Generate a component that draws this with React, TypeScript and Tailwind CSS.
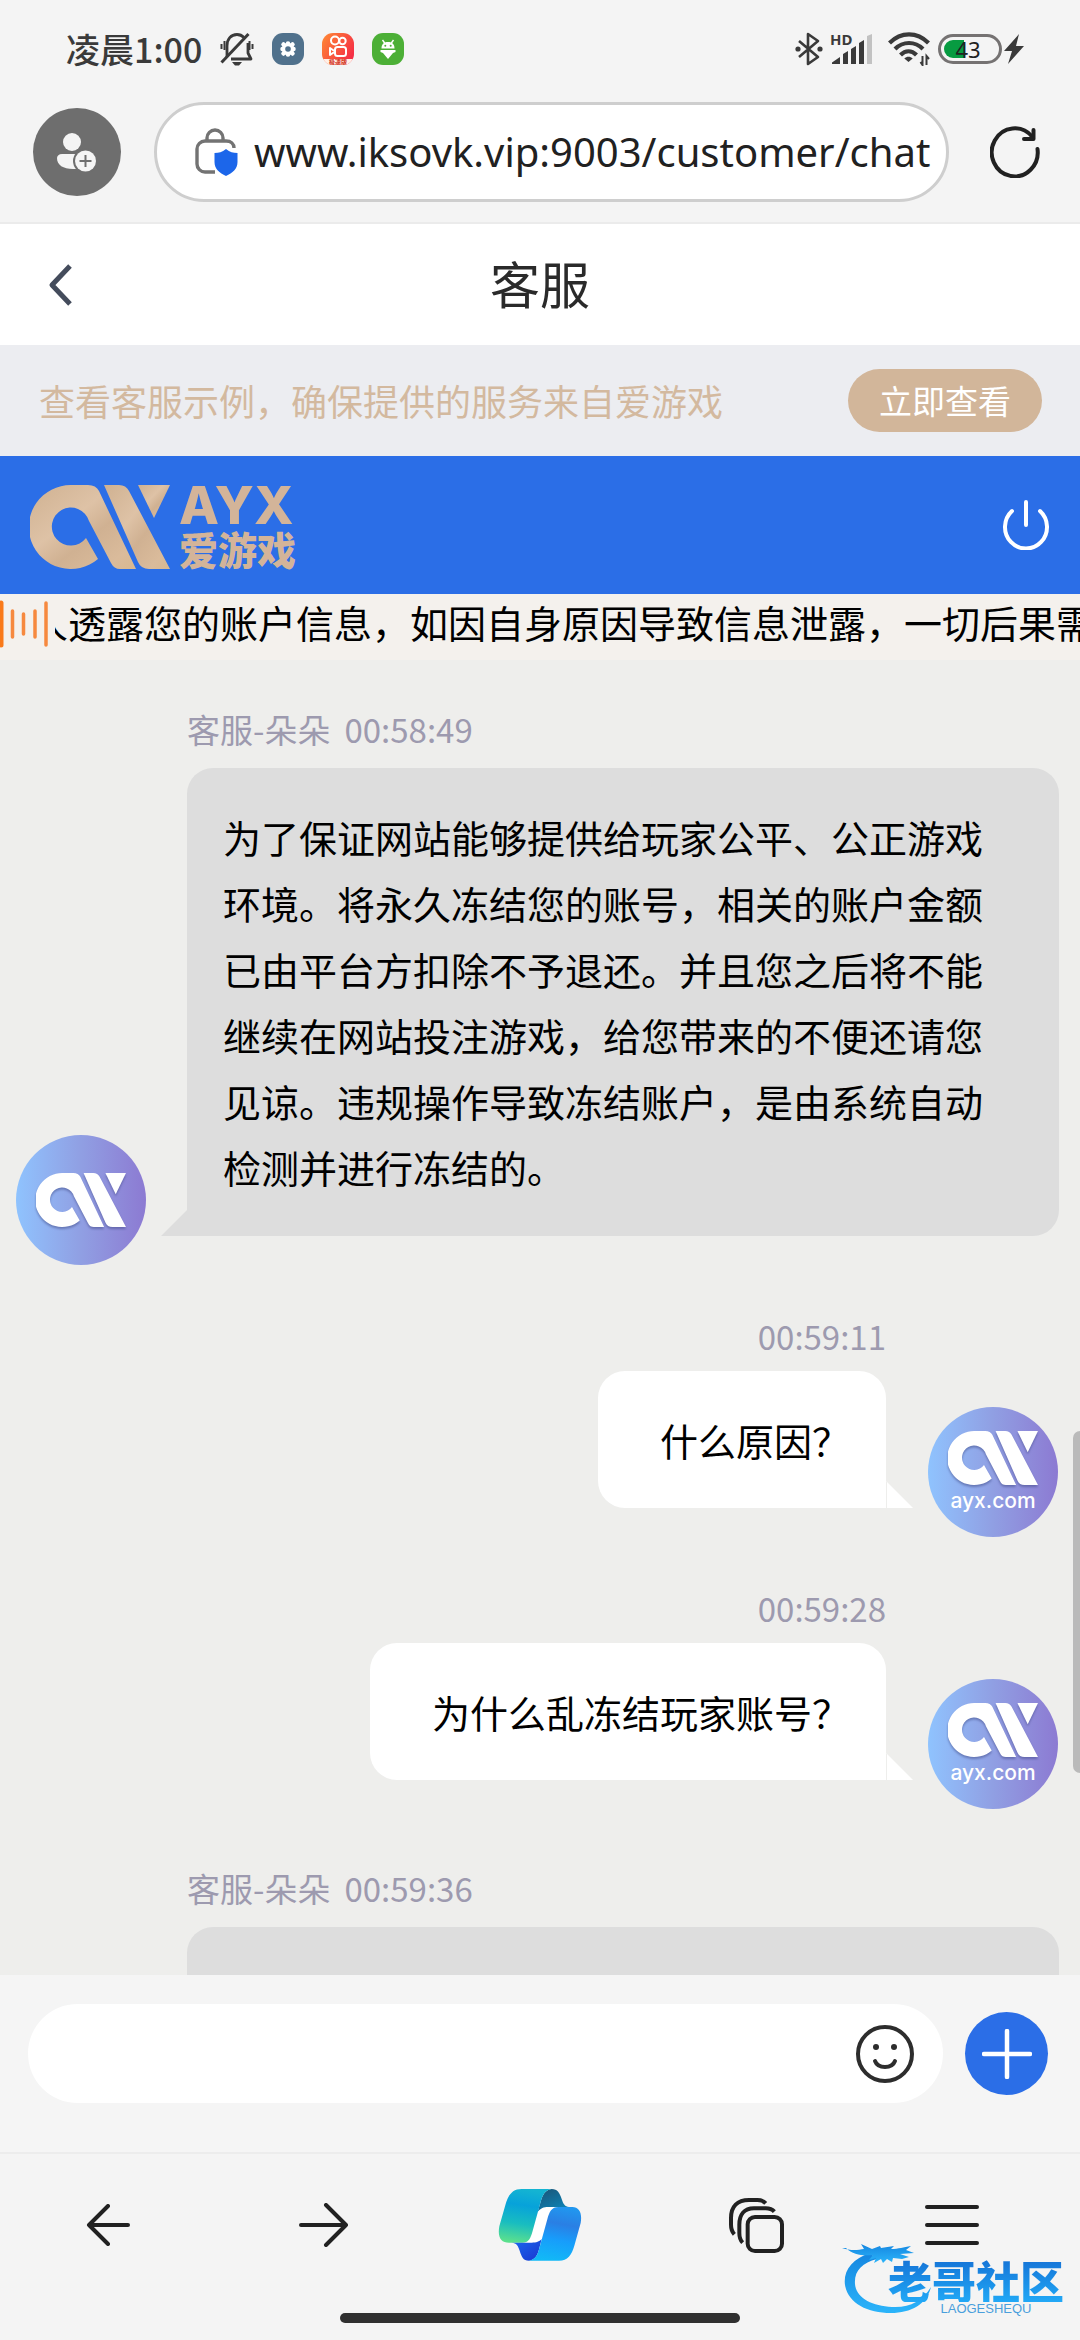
import type { ReactNode } from "react";

const statusIcon = "h-8 w-8 shrink-0";

function BellOff() {
  return (
    <svg viewBox="0 0 34 34" className="h-[34px] w-[34px] shrink-0" fill="none" stroke="#3a3a3a" strokeWidth="2.8">
      <path d="M7 25V14C7 7 11 2.500 17 2.500c3 0 5 1 7 3" />
      <path d="M28 11v10l3 6H11" strokeLinejoin="round" />
      <path d="M1.500 30.500 28.500 2" strokeWidth="3" />
      <path d="M1.500 12v5M4.500 9v9M29.500 9v9M32.500 12v5" strokeWidth="2" />
      <path d="M12 30h10l-3 3.500h-4z" fill="#3a3a3a" stroke="none" />
    </svg>
  );
}

function GearApp() {
  return (
    <svg viewBox="0 0 32 32" className={statusIcon}>
      <rect width="32" height="32" rx="11" fill="#50718c" />
      <g stroke="#fff" strokeWidth="4.500" strokeLinecap="round">
        <path d="M16 10.500v11M10.500 16h11M11.500 11.500l9 9M20.500 11.500l-9 9" />
      </g>
      <circle cx="16" cy="16" r="6" fill="#fff" />
      <circle cx="16" cy="16" r="2.800" fill="#50718c" />
    </svg>
  );
}

function CameraApp() {
  return (
    <svg viewBox="0 0 32 32" className={statusIcon}>
      <defs>
        <linearGradient id="cam" x1="0" y1="0" x2="1" y2="0.600">
          <stop offset="0" stopColor="#ff8a33" />
          <stop offset="1" stopColor="#f52f45" />
        </linearGradient>
        <clipPath id="camclip">
          <rect width="32" height="32" rx="11" />
        </clipPath>
      </defs>
      <g clipPath="url(#camclip)">
        <rect width="32" height="32" fill="url(#cam)" />
        <g fill="none" stroke="#fff" strokeWidth="2">
          <circle cx="13" cy="7.500" r="4" />
          <circle cx="20.500" cy="8" r="3.200" />
          <rect x="13" y="14" width="11" height="9" rx="2.500" />
          <path d="m8 15 5 3.500L8 22z" strokeLinejoin="round" />
        </g>
        <path d="M0 26h32v6H0z" fill="#fff0e8" />
        <text x="16" y="31" fontSize="6" fontWeight="900" textAnchor="middle" fill="#d6402f">
          极速版
        </text>
      </g>
    </svg>
  );
}

function AndroidApp() {
  return (
    <svg viewBox="0 0 32 32" className={statusIcon}>
      <rect width="32" height="32" rx="11" fill="#4caf36" />
      <path d="M9.500 15.500c0-4 2-6.500 6.500-6.500s6.500 2.500 6.500 6.500z" fill="#fff" />
      <path d="m10.500 7 2.500 3.500M21.500 7 19 10.500" stroke="#fff" strokeWidth="1.400" />
      <path d="M8.500 17h15v2l-2.500 1-5 6-5-6-2.500-1z" fill="#fff" />
      <circle cx="13.300" cy="12.700" r="1" fill="#4caf36" />
      <circle cx="18.700" cy="12.700" r="1" fill="#4caf36" />
    </svg>
  );
}

function Bluetooth() {
  return (
    <svg viewBox="0 0 28 34" className="h-[34px] w-7 shrink-0" fill="none" stroke="#3a3a3a" strokeWidth="2.600">
      <path d="m4 9 19 16-10 7V2l10 7L4 25" strokeLinejoin="round" />
      <circle cx="3" cy="17" r="2.600" fill="#3a3a3a" stroke="none" />
      <circle cx="25" cy="17" r="2.600" fill="#3a3a3a" stroke="none" />
    </svg>
  );
}

function Signal() {
  return (
    <svg viewBox="0 0 41 32" className="h-8 w-[41px] shrink-0 overflow-visible" fill="#3a3a3a">
      <text x="-1" y="12" fontSize="15" fontWeight="700" fontFamily="Noto Sans, sans-serif">
        HD
      </text>
      <path d="M1 29.500 9 24v7H1zM12 21l5-3v13h-5zM20 16l5-3v18h-5zM28 10l5-3v24h-5z" />
      <path d="M36 3l5-2v30h-5z" fill="#c2c2c2" />
    </svg>
  );
}

function Wifi() {
  return (
    <svg viewBox="0 0 42 34" className="h-[34px] w-[42px] shrink-0" fill="none" stroke="#3a3a3a" strokeWidth="4.200">
      <path d="M1.500 11C13-.5 29-.5 40.500 11" />
      <path d="M7 17c8-8 20-8 28 0" />
      <path d="M12.500 23c5-5 11-5 16 0" />
      <path d="m20.500 30-4.200-3.500c2.500-2.300 5.900-2.300 8.400 0z" fill="#3a3a3a" stroke="none" />
      <path d="M34.500 24v9l-2-3M38.500 33v-9l2.500 3" strokeWidth="2" />
    </svg>
  );
}

function Battery() {
  return (
    <div className="relative flex h-[30px] w-16 shrink-0 items-center justify-center rounded-full border-[3px] border-[#757272]">
      <div className="absolute inset-y-[3px] left-[3px] w-5 rounded-l-full bg-[#079b41]" />
      <span className="relative pr-1 font-['Noto_Sans'] text-[22px] leading-6 text-[#222]">43</span>
    </div>
  );
}

function Lock() {
  return (
    <svg viewBox="0 0 43 48" className="h-12 w-[43px] shrink-0">
      <g fill="none" stroke="#737373" strokeWidth="3.400">
        <path d="M12 13v-3a8 8 0 0 1 16 0v3" />
        <path d="M20 44h-10a8 8 0 0 1-8-8V21a8 8 0 0 1 8-8h21c5 0 8 3 8 7" />
      </g>
      <path d="M31 21c4 3 7 4 11.500 4v9c0 7-5 11-11.500 14-6.500-3-11.500-7-11.500-14v-9c4.500 0 7.500-1 11.500-4z" fill="#1c66ea" />
    </svg>
  );
}

function Mark({ className, fill }: { className: string; fill: string }) {
  return (
    <svg viewBox="0 0 140 84" className={className} fill={fill}>
      <defs>
        <linearGradient id="gold" x1="0" y1="0" x2="1" y2="1">
          <stop offset="0" stopColor="#cfb191" />
          <stop offset="0.400" stopColor="#dec2a6" />
          <stop offset="0.600" stopColor="#d0b192" />
          <stop offset="0.850" stopColor="#dabb9b" />
          <stop offset="1" stopColor="#d8b88f" />
        </linearGradient>
      </defs>
      <path d="M41 0H58Q66 0 69 6L106 84H90Q84 84 81 78L59 36A19 19 0 1 0 56 53L68 74A42 42 0 1 1 41 0Z" />
      <path d="M74 0H89Q96 0 99 6L140 84H119Q111 84 108 77Z" />
      <path d="M108 0H140L124 33Z" />
    </svg>
  );
}

function Avatar({ caption }: { caption?: string }) {
  return (
    <div className="-mb-[29px] flex h-[130px] w-[130px] shrink-0 flex-col items-center justify-center rounded-full bg-linear-to-r from-[#8fc3fe] via-[#909fe3] to-[#8c7ad2] text-white">
      <Mark className="h-[54px] w-[90px] drop-shadow-[0_2px_1px_rgba(60,70,130,0.5)]" fill="#fff" />
      {caption && <span className="mt-1 font-['Inter'] text-[21px] leading-6 font-medium">{caption}</span>}
    </div>
  );
}

function AgentMessage({ name, time, children }: { name: string; time: string; children?: ReactNode }) {
  return (
    <article className="mb-[77px] pt-2">
      <div className="mb-[14px] ml-[187px] flex h-12 items-center gap-[14px] text-[33px] text-[#9d9aaf]">
        <span>{name}</span>
        <time>{time}</time>
      </div>
      <div className="flex items-end gap-[41px] pr-[21px] pl-4">
        <Avatar />
        <div className="relative min-h-[200px] flex-1 rounded-[26px] rounded-bl-none bg-[#dddddd] py-9 pr-[60px] pl-9 text-[38px] leading-[66px] text-black">
          {children}
          <span className="absolute right-full bottom-0 h-[26px] w-[26px] bg-[#dddddd] [clip-path:polygon(100%_0,100%_100%,0_100%)]" />
        </div>
      </div>
    </article>
  );
}

function UserMessage({ time, children }: { time: string; children: ReactNode }) {
  return (
    <article className="mb-[77px] flex items-end justify-end gap-[42px] pr-[22px]">
      <div className="flex flex-col items-end">
        <time className="mb-[10px] flex h-12 items-center text-[33px] text-[#9d9aaf]">{time}</time>
        <div className="relative rounded-[27px] rounded-br-none bg-white py-9 pr-9 pl-[62px] text-[38px] leading-[65px] text-black">
          {children}
          <span className="absolute bottom-0 left-full h-[27px] w-[27px] border-l border-[#eeeeec] bg-white [clip-path:polygon(0_0,100%_100%,0_100%)]" />
        </div>
      </div>
      <Avatar caption="ayx.com" />
    </article>
  );
}

function Copilot() {
  return (
    <svg viewBox="0 0 250 216" className="h-[72px] w-[84px]">
      <defs>
        <linearGradient id="cpLeft" x1="0.500" y1="0" x2="0.350" y2="1">
          <stop offset="0" stopColor="#14b4d2" />
          <stop offset="0.300" stopColor="#07a2da" />
          <stop offset="0.650" stopColor="#19bdc0" />
          <stop offset="1" stopColor="#5be08d" />
        </linearGradient>
        <linearGradient id="cpTop" x1="0" y1="0" x2="0.600" y2="1">
          <stop offset="0" stopColor="#1b5375" />
          <stop offset="1" stopColor="#0d82b4" />
        </linearGradient>
        <linearGradient id="cpRight" x1="0.600" y1="0" x2="0.400" y2="1">
          <stop offset="0" stopColor="#2196ee" />
          <stop offset="0.300" stopColor="#2a7fe4" />
          <stop offset="0.600" stopColor="#179dfb" />
          <stop offset="1" stopColor="#12b9f6" />
        </linearGradient>
        <linearGradient id="cpBottom" x1="0" y1="0" x2="1" y2="1">
          <stop offset="0" stopColor="#1c6bf0" />
          <stop offset="1" stopColor="#1a35cf" />
        </linearGradient>
      </defs>
      <path d="M145 54H180C160 54 153 68 147 91L131 148C127 158 118 161 100 161H80C93 158 98 145 103 125L120 65C124 56 132 54 145 54Z" fill="#fff" />
      <path d="M160 0C178 0 184 12 190 30C195 46 200 53 212 54H150C135 54 128 58 118 68L127 38C132 20 140 2 160 0Z" fill="url(#cpTop)" />
      <path d="M70 0H160C140 2 132 20 127 38L103 125C97 148 90 161 72 161H32C8 161-3 145 3 112L22 45C30 18 42 0 70 0Z" fill="url(#cpLeft)" />
      <path d="M92 215C74 215 70 203 64 185C59 170 55 162 40 161H100C115 161 122 158 130 150L123 178C118 196 112 214 92 215Z" fill="url(#cpBottom)" />
      <path d="M180 54H222C243 54 252 72 247 102L228 170C220 198 208 215 182 215H90C112 214 118 196 123 178L147 91C153 68 160 54 180 54Z" fill="url(#cpRight)" />
    </svg>
  );
}

function Watermark() {
  return (
    <div className="pointer-events-none absolute right-4 bottom-6 flex h-[76px] w-[222px] justify-end">
      <svg viewBox="0 0 222 76" className="absolute inset-0 h-full w-full">
        <defs>
          <linearGradient id="ring" x1="0" y1="0" x2="0" y2="1">
            <stop offset="0" stopColor="#1586e0" />
            <stop offset="1" stopColor="#2bb4fa" />
          </linearGradient>
        </defs>
        <g fill="url(#ring)">
          <path d="M28 13C10 19 1 31 3 45c3 18 22 28 46 28 20 0 36-9 40-26-9 14-21 21-39 20C30 66 14 58 13 44c-1-13 7-21 22-25z" />
          <path d="M0 8c9 3 16 2 22 1l-3-5 11 5 8-3 1 2 13-2-3 3c8 0 12-2 20-3l-5 4 8 3-14 1 9 3-7 2-9-1-1 4-5-3-4 4-2-4-7 4 2-5-7 2 4-5c-10 1-20 0-27-7z" />
        </g>
      </svg>
      <div className="relative flex flex-col items-center pt-[18px]">
        <span className="bg-linear-to-b from-[#1672d6] to-[#22a8f6] bg-clip-text text-[44px] leading-[44px] font-black text-transparent">
          老哥社区
        </span>
        <span className="pl-5 font-['Liberation_Sans'] text-[13px] leading-[14px] text-[#4a9fdc]">LAOGESHEQU</span>
      </div>
    </div>
  );
}

export default function App() {
  return (
    <main className="flex h-screen flex-col overflow-hidden bg-[#f4f4f4] font-['Noto_Sans_CJK_SC',sans-serif]">
      {/* Status bar */}
      <div className="flex h-[98px] shrink-0 items-center justify-between pr-14 pl-[66px]">
        <div className="flex items-center gap-[18px]">
          <span className="pb-[2px] text-[34px] font-medium text-[#3a3a3a]">凌晨1:00</span>
          <BellOff />
          <GearApp />
          <CameraApp />
          <AndroidApp />
        </div>
        <div className="flex items-center">
          <Bluetooth />
          <div className="mr-4 ml-2">
            <Signal />
          </div>
          <Wifi />
          <div className="mr-[2px] ml-2">
            <Battery />
          </div>
          <svg viewBox="0 0 20 30" className="h-[30px] w-5" fill="#3a3a3a">
            <path d="M15 0 0 17h8L4 30 20 12h-8z" />
          </svg>
        </div>
      </div>

      {/* Address bar */}
      <div className="flex h-[126px] shrink-0 items-center border-b-2 border-[#ebebeb] pr-10 pb-4 pl-[33px]">
        <button aria-label="账户" className="flex h-[88px] w-[88px] shrink-0 items-center justify-center rounded-full bg-[#6e6e6e]">
          <svg viewBox="0 0 40 40" className="h-10 w-10">
            <circle cx="15" cy="10" r="9" fill="#f4f4f4" />
            <path d="M5 22h20v15H16C6 37 0 33 0 26c0-2 2-4 5-4z" fill="#f4f4f4" />
            <circle cx="28.500" cy="29" r="12.500" fill="#6e6e6e" />
            <circle cx="28.500" cy="29" r="10.500" fill="#f4f4f4" />
            <path d="M28.500 23v12M22.500 29h12" stroke="#6e6e6e" strokeWidth="2" />
          </svg>
        </button>
        <div className="mr-[41px] ml-[33px] flex h-[100px] min-w-0 flex-1 items-center gap-4 rounded-full border-[3px] border-[#cecece] bg-white pr-3 pl-[38px]">
          <Lock />
          <input
            aria-label="网址"
            type="text"
            defaultValue="www.iksovk.vip:9003/customer/chat"
            className="w-full min-w-0 bg-transparent font-['Noto_Sans'] text-[40px] text-[#212121] outline-none"
          />
        </div>
        <button aria-label="刷新" className="shrink-0">
          <svg viewBox="0 0 50 52" className="h-[52px] w-[50px]" fill="none" stroke="#212121" strokeWidth="4" strokeLinecap="round" strokeLinejoin="round">
            <path d="M47.500 23A23 24 0 1 1 42 10.500" />
            <path d="M43.500 4v9H34" />
          </svg>
        </button>
      </div>

      {/* Page title */}
      <header className="relative flex h-[121px] shrink-0 items-center justify-center bg-white">
        <button aria-label="返回" className="absolute left-[48px]">
          <svg viewBox="0 0 24 42" className="h-[42px] w-6" fill="none" stroke="#444c5c" strokeWidth="5">
            <path d="M22 2 4 21l18 19" strokeLinejoin="round" />
          </svg>
        </button>
        <h1 className="pb-1 text-[50px] text-[#2a2a2a]">客服</h1>
      </header>

      {/* Verification banner */}
      <div className="flex h-[111px] shrink-0 items-center justify-between bg-[#ecedf1] pr-[38px] pl-[39px]">
        <p className="pb-[2px] text-[36px] text-[#d3b99f]">查看客服示例，确保提供的服务来自爱游戏</p>
        <button className="h-[63px] w-[194px] rounded-full bg-[#d2b69a] text-[33px] leading-[63px] text-white">立即查看</button>
      </div>

      {/* Brand bar */}
      <div className="flex h-[138px] shrink-0 items-center justify-between bg-[#2b6ee7] px-[30px]">
        <div className="flex items-center gap-[9px] pt-1">
          <Mark className="h-[84px] w-[140px]" fill="url(#gold)" />
          <div className="flex flex-col text-[#d3b499]">
            <span className="font-['Inter'] text-[52px] leading-[42px] font-extrabold">AYX</span>
            <span className="text-[39px] leading-[42px] font-black">爱游戏</span>
          </div>
        </div>
        <button aria-label="退出">
          <svg viewBox="0 0 48 50" className="h-[50px] w-12" fill="none" stroke="#fff" strokeWidth="4" strokeLinecap="round">
            <path d="M24 2v23M10 11a21 21.500 0 1 0 28 0" />
          </svg>
        </button>
      </div>

      {/* Scrolling notice */}
      <div className="flex h-[66px] shrink-0 items-start bg-[#f4f1ed]">
        <svg viewBox="0 0 48 60" className="mr-[7px] h-[60px] w-12 shrink-0" stroke="#f6893f" strokeWidth="3.500" strokeLinecap="round">
          <path d="M1 9v42" stroke="#f97a1a" strokeWidth="5" />
          <path d="M12.500 17v26M23.500 20v20M35 17v26M46 9v42" />
        </svg>
        <div className="min-w-0 flex-1 overflow-hidden">
          <p className="-ml-[25px] text-[38px] leading-[56px] whitespace-nowrap text-black">
            人透露您的账户信息，如因自身原因导致信息泄露，一切后果需自行承担
          </p>
        </div>
      </div>

      {/* Conversation */}
      <section className="relative min-h-0 flex-1 overflow-hidden bg-[#eeeeec] pt-[38px]">
        <AgentMessage name="客服-朵朵" time="00:58:49">
          为了保证网站能够提供给玩家公平、公正游戏环境。将永久冻结您的账号，相关的账户金额已由平台方扣除不予退还。并且您之后将不能继续在网站投注游戏，给您带来的不便还请您见谅。违规操作导致冻结账户，是由系统自动检测并进行冻结的。
        </AgentMessage>
        <UserMessage time="00:59:11">什么原因？</UserMessage>
        <UserMessage time="00:59:28">为什么乱冻结玩家账号？</UserMessage>
        <AgentMessage name="客服-朵朵" time="00:59:36" />
        <div className="absolute top-[771px] right-0 h-[342px] w-[7px] rounded-l-full bg-[#bababa]" />
      </section>

      {/* Composer */}
      <div className="flex h-[177px] shrink-0 items-start gap-[22px] bg-[#f5f5f5] pt-[29px] pr-8 pl-7">
        <div className="flex h-[99px] flex-1 items-center rounded-full bg-white pr-[28px] pl-10">
          <input aria-label="消息" type="text" className="h-full min-w-0 flex-1 bg-transparent text-[38px] outline-none" />
          <button aria-label="表情">
            <svg viewBox="0 0 60 60" className="h-[60px] w-[60px]" fill="none" stroke="#2d2d2d" strokeWidth="4" strokeLinecap="round">
              <circle cx="30" cy="30" r="27" />
              <path d="M20 37c3 8 17 8 20 0" />
              <circle cx="21" cy="23" r="3" fill="#2d2d2d" stroke="none" />
              <circle cx="39" cy="23" r="3" fill="#2d2d2d" stroke="none" />
            </svg>
          </button>
        </div>
        <button aria-label="更多" className="mt-2 flex h-[83px] w-[83px] items-center justify-center rounded-full bg-[#2b6ee7]">
          <svg viewBox="0 0 50 50" className="h-[50px] w-[50px]" stroke="#fff" strokeWidth="4.500" strokeLinecap="round">
            <path d="M25 2v46M2 25h46" />
          </svg>
        </button>
      </div>

      {/* Browser navigation */}
      <nav className="relative h-[188px] shrink-0 border-t-2 border-[#ececec]">
        <div className="grid h-[142px] grid-cols-5 text-[#212121]">
          <button aria-label="后退" className="flex items-center justify-center">
            <svg viewBox="0 0 44 42" className="h-[42px] w-11" fill="none" stroke="currentColor" strokeWidth="4" strokeLinecap="round" strokeLinejoin="round">
              <path d="M22 2 3 21l19 19M3 21h39" />
            </svg>
          </button>
          <button aria-label="前进" className="flex items-center justify-center">
            <svg viewBox="0 0 50 44" className="h-11 w-[50px]" fill="none" stroke="currentColor" strokeWidth="4" strokeLinecap="round" strokeLinejoin="round">
              <path d="m27 2 20 20-20 20M2 22h45" />
            </svg>
          </button>
          <button aria-label="Copilot" className="flex items-center justify-center">
            <Copilot />
          </button>
          <button aria-label="标签页" className="flex items-center justify-center">
            <svg viewBox="0 0 165 165" className="h-[55px] w-[55px]" fill="none" stroke="currentColor" strokeWidth="12">
              <rect x="56" y="57" width="103" height="102" rx="22" />
              <path d="M41 134C33 126 31 116 31 105V80C31 50 45 31 75 31H110C122 31 130 34 136 41" />
              <path d="M16 109C8 100 6 90 6 80V60C6 25 25 6 60 6H85C97 6 104 9 110 16" />
            </svg>
          </button>
          <button aria-label="菜单" className="flex items-center justify-center pr-10">
            <svg viewBox="0 0 54 42" className="h-[42px] w-[54px]" stroke="currentColor" strokeWidth="4" strokeLinecap="round">
              <path d="M2 3h50M2 21h50M2 39h50" />
            </svg>
          </button>
        </div>
        <div className="mx-auto mt-[17px] h-[10px] w-[400px] rounded-full bg-[#303030]" />
        <Watermark />
      </nav>
    </main>
  );
}
